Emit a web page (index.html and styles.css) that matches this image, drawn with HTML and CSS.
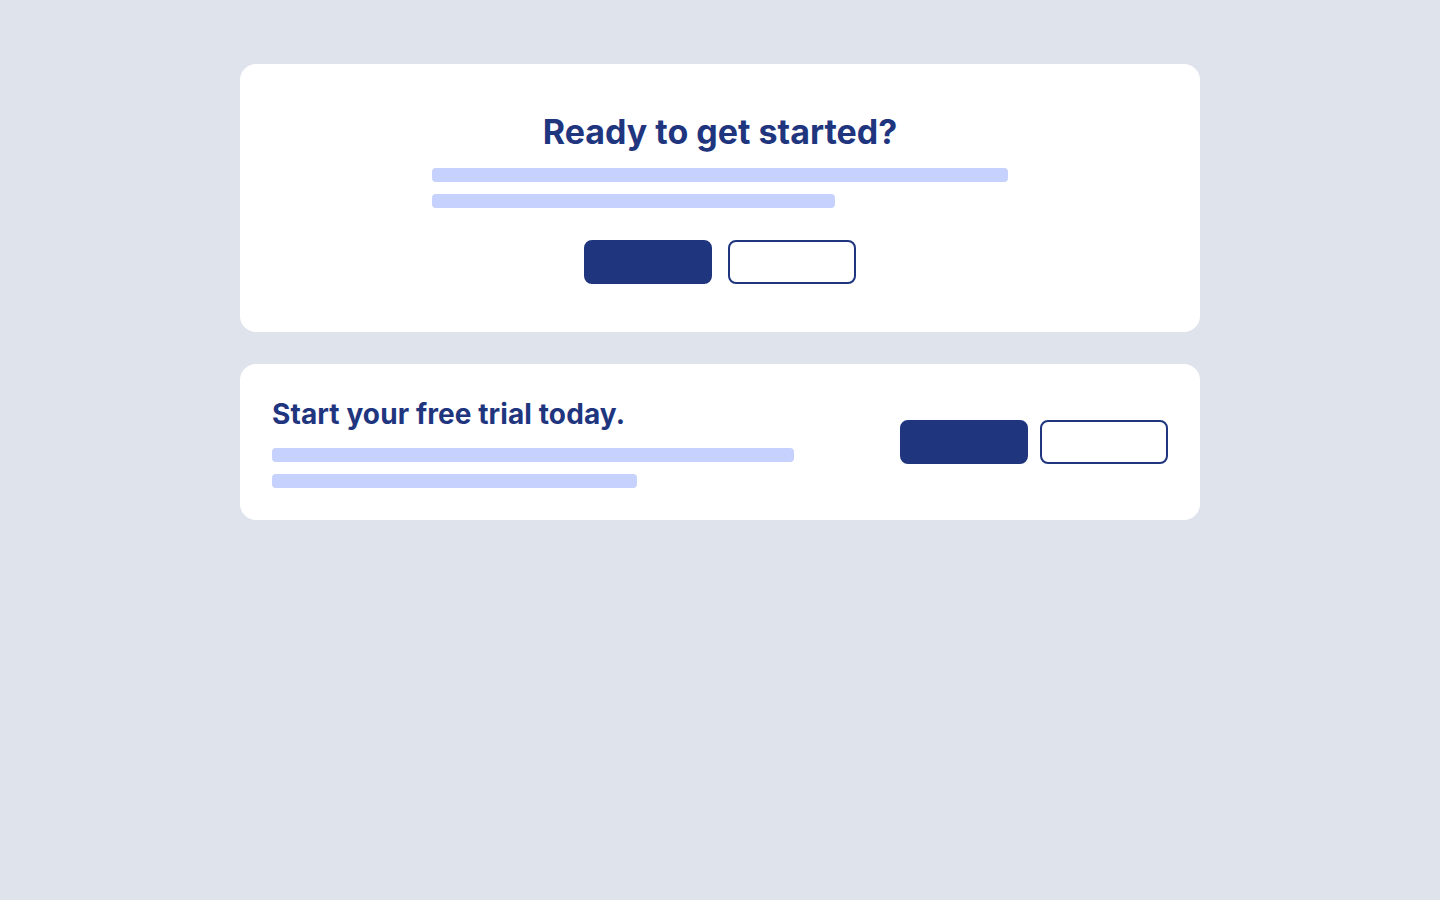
FILE: index.html
```html
<!DOCTYPE html>
<html lang="en">
<head>
    <meta charset="UTF-8">
    <meta name="viewport" content="width=device-width, initial-scale=1.0">
    <title>Call to Action</title>
    <link rel="stylesheet" href="styles.css">
</head>
<body>
    <div class="container">
        <!-- Centered CTA -->
        <div class="card card-center">
            <h2 class="cta-title">Ready to get started?</h2>
            <div class="text-lines">
                <div class="line"></div>
                <div class="line line-short"></div>
            </div>
            <div class="actions">
                <button class="btn btn-primary"></button>
                <button class="btn btn-outline"></button>
            </div>
        </div>

        <!-- Split CTA -->
        <div class="card card-split">
            <div class="split-text">
                <h2 class="cta-title small">Start your free trial today.</h2>
                <div class="line"></div>
                <div class="line line-short"></div>
            </div>
            <div class="actions tight">
                <button class="btn btn-primary"></button>
                <button class="btn btn-outline"></button>
            </div>
        </div>
    </div>
</body>
</html>
```

FILE: styles.css
```css
body {
    font-family: Inter, "Liberation Sans", sans-serif;
    margin: 0;
    padding: 64px 0;
    background-color: #dfe3ec;
}
.container {
    width: 960px;
    margin: 0 auto;
    display: flex;
    flex-direction: column;
    gap: 32px;
}
.card {
    background: white;
    border-radius: 16px;
}
.card-center {
    padding: 48px 32px;
    display: flex;
    flex-direction: column;
    align-items: center;
}
.cta-title {
    margin: 0;
    color: #1f367f;
    font-size: 34px;
    line-height: 40px;
    font-weight: 700;
}
.cta-title.small {
    font-size: 28px;
    line-height: 36px;
    letter-spacing: 0.1px;
    margin-bottom: 16px;
}
.text-lines {
    width: 576px;
    margin-top: 16px;
}
.line {
    height: 14px;
    background: #c6d2fd;
    border-radius: 4px;
    margin-bottom: 12px;
}
.line:last-child {
    margin-bottom: 0;
}
.line-short {
    width: 70%;
}
.actions {
    display: flex;
    gap: 16px;
    margin-top: 32px;
}
.actions.tight {
    gap: 12px;
    margin-top: 0;
}
.btn {
    width: 128px;
    height: 44px;
    border-radius: 8px;
    border: 2px solid #1f367f;
    padding: 0;
    cursor: pointer;
    box-sizing: border-box;
}
.btn-primary {
    background: #1f367f;
}
.btn-outline {
    background: white;
}
.card-split {
    padding: 32px;
    display: flex;
    justify-content: space-between;
    align-items: center;
}
.split-text {
    width: 522px;
}
```
